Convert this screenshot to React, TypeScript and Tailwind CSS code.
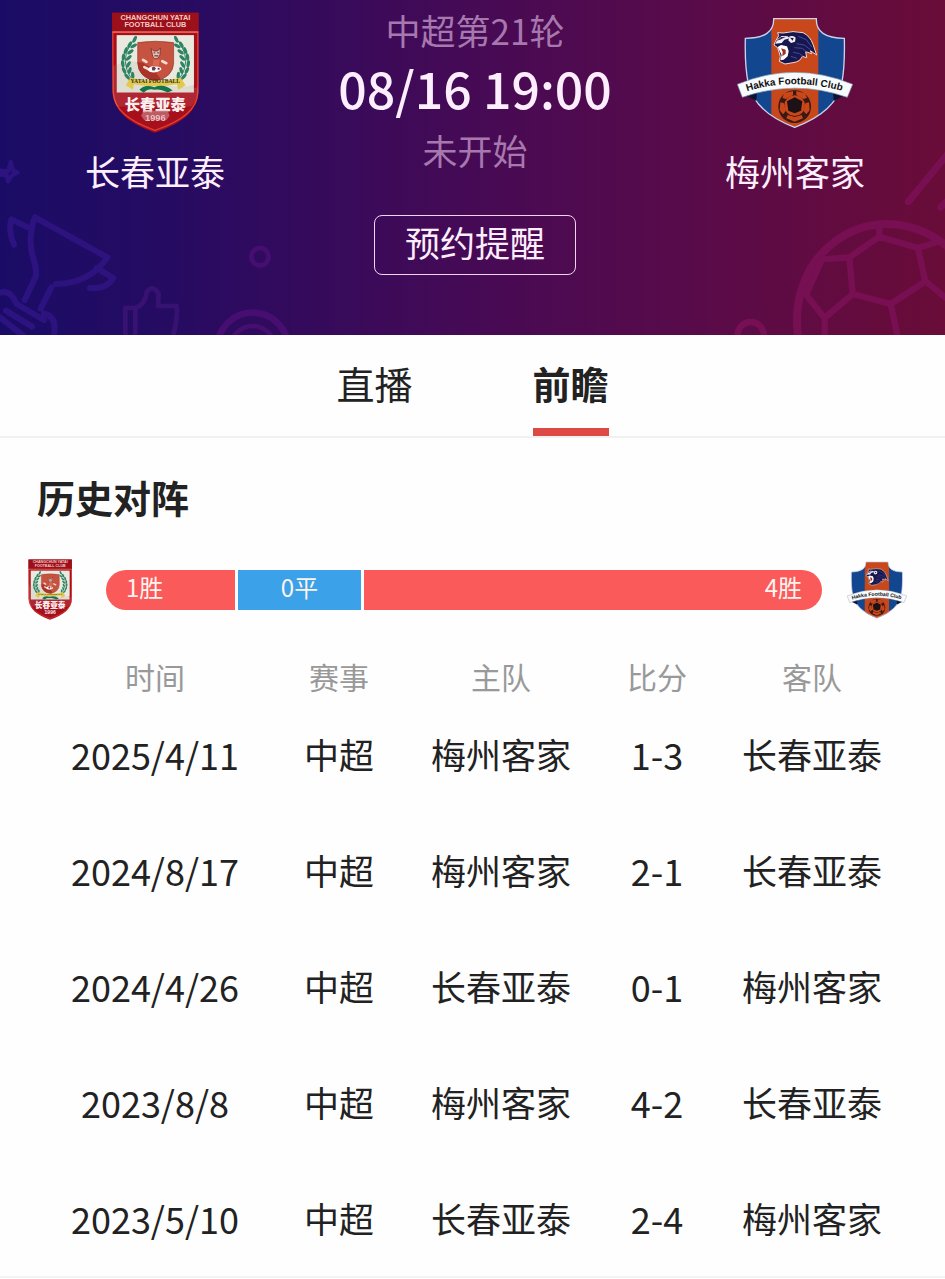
import React from 'react';

interface CrestProps {
  className?: string;
  smudged?: boolean;
}

interface Match {
  date: string;
  league: string;
  home: string;
  score: string;
  away: string;
}

const matches: Match[] = [
  { date: '2025/4/11', league: '中超', home: '梅州客家', score: '1-3', away: '长春亚泰' },
  { date: '2024/8/17', league: '中超', home: '梅州客家', score: '2-1', away: '长春亚泰' },
  { date: '2024/4/26', league: '中超', home: '长春亚泰', score: '0-1', away: '梅州客家' },
  { date: '2023/8/8', league: '中超', home: '梅州客家', score: '4-2', away: '长春亚泰' },
  { date: '2023/5/10', league: '中超', home: '长春亚泰', score: '2-4', away: '梅州客家' }
];

// Leaves of the left half of the wreath, mirrored for the right half
const leaves = [
  [131, 118, 25], [116, 134, 30], [128, 138, 60], [104, 152, 20], [118, 156, 55],
  [97, 172, 5], [113, 174, 45], [95, 192, -10], [112, 194, 30], [99, 212, -25],
  [116, 212, 15], [108, 230, -40], [125, 227, -5], [122, 244, -55]
];

const Wreath: React.FC = () => (
  <g fill="#2c8463">
    <path d="M136 110 Q90 160 107 208 Q116 238 142 252" fill="none" stroke="#2c8463" strokeWidth="3" />
    {leaves.map(([x, y, r]) => (
      <ellipse key={`${x}-${y}`} cx={x} cy={y} rx="5" ry="11" transform={`rotate(${r} ${x} ${y})`} />
    ))}
  </g>
);

const YataiCrest: React.FC<CrestProps> = ({ className, smudged }) => (
  <svg viewBox="60 36 264 364" className={className} role="img" aria-label="长春亚泰">
    <path d="M63 38 H323 V275 C322 335 270 372 192 399 C116 372 66 335 64 275 Z" fill="#a80f1c" />
    <path d="M63 38 H323 V95 H63 Z" fill="#9c101c" />
    <path d="M65 97 H321 V275 C320 332 268 366 192 392 C118 366 68 332 66 275 Z" fill="none" stroke="#e2412f" strokeWidth="4" />
    <path d="M64 96 H322" stroke="#f0a49a" strokeWidth="2" />
    <g fill="#f5c9c4" fontFamily="Liberation Sans, sans-serif" fontWeight="700" textAnchor="middle">
      <text x="193" y="61" fontSize="22">CHANGCHUN YATAI</text>
      <text x="193" y="82" fontSize="22">FOOTBALL CLUB</text>
    </g>
    <path d="M77 106 H309 V278 H77 Z" fill="#dcdacd" />
    <path d="M77 106 H309 V255 Q240 275 200 235 Q140 160 77 195 Z" fill="#f0efe8" opacity=".7" />
    <path d="M65 200 Q120 165 180 215 Q240 285 321 262 V275 C318 300 310 310 300 320 L77 320 Q66 300 65 275 Z" fill="#fff" opacity=".1" />
    <Wreath />
    <g transform="translate(387 0) scale(-1 1)">
      <Wreath />
    </g>
    <path d="M140 128 Q193 120 248 128 V190 Q246 232 193 244 Q142 232 140 190 Z" fill="#c65340" stroke="#9a3527" strokeWidth="2" />
    <path d="M140 186 Q176 190 208 236 Q200 243 193 244 Q142 232 140 190 Z" fill="#a93427" />
    {/* mascot */}
    <path d="M180 146 L188 153 L200 153 L208 144 L207 165 Q203 177 195 177 Q186 177 184 164 Z" fill="#f0bcae" stroke="#7c3a33" strokeWidth="3" />
    <path d="M188 159 H193 M199 159 H204 M190 168 H202" stroke="#432023" strokeWidth="3" />
    <path d="M187 179 H207 L203 198 H185 Z" fill="#dc6750" />
    <path d="M156 180 L166 186 M214 184 L226 190 M160 202 L176 210" stroke="#f6dcd0" strokeWidth="8" strokeLinecap="round" />
    <path d="M170 210 Q176 196 192 200 Q212 198 211 210 Q196 222 176 216 Z" fill="#fff" />
    <path d="M182 203 L189 200 L195 205 L191 212 H184 Z M200 204 H206 V210 H200 Z" fill="#6b3a4a" />
    <path d="M104 256 L118 234 Q193 252 269 234 L284 256 L262 270 L258 253 Q193 266 128 253 L126 270 Z" fill="#e3c84e" />
    <path d="M145 270 Q160 252 190 262 Q220 250 245 272 L230 278 Q206 266 190 270 Q172 265 158 279 Z" fill="#15744a" />
    <text x="193" y="249" fontSize="17" fontFamily="Liberation Serif, serif" fontWeight="700" textAnchor="middle" fill="#2d3320">YATAI FOOTBALL</text>
    <text x="193" y="330" fontSize="46" fontFamily="Noto Sans CJK SC, sans-serif" fontWeight="900" textAnchor="middle" fill="#fbeeee">长春亚泰</text>
    {smudged ? (
      <g className="blur-[1px]">
        <path d="M158 332 H230 L236 348 L226 362 H160 L150 348 Z" fill="#cf8d93" opacity=".6" />
        <text x="193" y="363" fontSize="28" fontFamily="Liberation Sans, sans-serif" fontWeight="700" textAnchor="middle" fill="#e6bfc2">1996</text>
      </g>
    ) : (
      <text x="193" y="363" fontSize="30" fontFamily="Liberation Sans, sans-serif" fontWeight="700" textAnchor="middle" fill="#fbeeee">1996</text>
    )}
  </svg>
);

const HakkaCrest: React.FC<CrestProps> = ({ className }) => (
  <svg viewBox="38 50 348 336" className={className} role="img" aria-label="梅州客家">
    <defs>
      <clipPath id="hakka-shield">
        <path d="M148 55 H276 Q274 114 360 114 Q362 200 352 250 Q335 335 211 381 Q90 335 72 250 Q61 200 63 114 Q150 114 148 55 Z" />
      </clipPath>
      <path id="hakka-ribbon" d="M68 273 Q212 228 370 277" />
    </defs>
    <g clipPath="url(#hakka-shield)">
      <path d="M60 50 H365 V385 H60 Z" fill="#12468f" />
      <path d="M141 50 H282 V385 H141 Z" fill="#c8481c" />
    </g>
    <path d="M148 55 H276 Q274 114 360 114 Q362 200 352 250 Q335 335 211 381 Q90 335 72 250 Q61 200 63 114 Q150 114 148 55 Z" fill="none" stroke="#c9d4ee" strokeWidth="4" />
    {/* lion head */}
    <path d="M149 134 L153 124 L163 106 L160 97 L176 98 Q206 90 236 97 Q258 108 266 132 L277 164 L258 151 L262 160 L244 154 L247 172 L234 168 Q228 184 206 187 L182 191 L165 183 L168 168 L160 142 Z" fill="#17174e" stroke="#f6d9d0" strokeWidth="3" strokeLinejoin="round" />
    <path d="M153 130 L160 116 L172 107 L190 108 L196 114 L180 118 L172 128 Z" fill="#f4eef2" />
    <path d="M156 122 L170 110 L184 110 L170 117 Z" fill="#312a6d" />
    <path d="M196 108 Q208 104 214 112 L212 124 L200 128 L192 120 Z" fill="#f3eef2" />
    <path d="M197 112 L208 113 L205 121 Z" fill="#17174e" />
    <path d="M160 140 L170 134 L188 138 L193 152 L190 168 L178 178 L168 180 L172 164 Z" fill="#fff" />
    <path d="M170 144 L184 148 L184 160 L174 168 L175 155 Z" fill="#a72b22" />
    <path d="M216 130 L240 134 L258 148 M210 142 L234 144 L246 154 M206 156 L226 160 L236 168 M222 108 L246 118 L262 140 M200 168 L218 174" fill="none" stroke="#4048a0" strokeWidth="3" />
    {/* football */}
    <circle cx="211" cy="319" r="49" fill="#3a1813" />
    <g fill="#c8481c">
      <path d="M180 279 L206 272 L206 284 L184 296 L174 292 Z M216 272 L242 279 L248 292 L238 296 L216 284 Z" />
      <path d="M168 306 L179 309 L184 333 L176 342 L166 330 Z M254 306 L243 309 L238 333 L246 342 L256 330 Z" />
      <path d="M190 344 L211 350 L232 344 L236 354 L211 364 L186 354 Z" />
      <circle cx="211" cy="316" r="31" />
    </g>
    <path d="M211 291 L234 303 L230 331 L211 339 L192 331 L188 303 Z" fill="#1d1115" />
    {/* ribbon */}
    <path d="M62 284 L98 275 L96 302 Z M362 284 L326 275 L328 302 Z" fill="#0b1533" />
    <path d="M39 252 Q212 180 385 252 L369 291 Q212 236 54 291 Z" fill="#f8fbfd" stroke="#7e94a8" strokeWidth="2" />
    <text fontSize="30" fontFamily="Liberation Sans, sans-serif" fontWeight="700" fill="#111">
      <textPath href="#hakka-ribbon">Hakka Football Club</textPath>
    </text>
  </svg>
);

// Faint trophy, thumb and rings in the left corner of the header
const LeftArt: React.FC = () => (
  <svg viewBox="0 0 930 585" className="absolute bottom-0 left-0 h-[195px] w-[310px]" fill="none" strokeLinecap="round" strokeLinejoin="round" aria-hidden="true">
    <g stroke="#34168a" strokeWidth="18" opacity=".7">
      <path d="M0 92 L24 94 L32 66 L38 90 L52 98 L36 106 L24 124 L20 106 L0 104" strokeWidth="13" />
      <path d="M105 232 L322 352 Q270 430 168 432 M105 232 Q82 290 98 350 Q110 380 108 408 L74 480" />
      <path d="M84 262 L34 238 Q24 270 42 314 M290 384 L340 414 Q320 448 270 444" />
      <path d="M154 442 L122 506 M0 458 Q30 446 50 492 L132 540 M18 512 L96 560 M0 532 L68 585 M132 520 Q172 530 162 585" />
    </g>
    <g stroke="#3f1578" strokeWidth="14" opacity=".75">
      <path d="M376 585 V504 H406 V585 M406 504 Q436 494 440 456 Q460 432 476 462 L474 498 H530 Q534 530 520 585" />
    </g>
    <g stroke="#4f1078" opacity=".75">
      <circle cx="780" cy="350" r="26" strokeWidth="14" />
      <circle cx="758" cy="624" r="106" strokeWidth="20" />
      <circle cx="758" cy="624" r="66" strokeWidth="14" />
    </g>
  </svg>
);

// Faint football in the right corner of the header
const RightArt: React.FC = () => (
  <svg viewBox="0 0 735 585" className="absolute right-0 bottom-0 h-[195px] w-[245px]" fill="none" stroke="#7d1058" strokeLinecap="round" strokeLinejoin="round" aria-hidden="true">
    <g opacity=".8">
      <path d="M294 585 C280 480 318 390 366 340 C420 282 480 254 556 252 C630 252 690 276 745 322" strokeWidth="24" />
      <path d="M538 258 V290 L448 352 L458 462 L572 492 L676 424 L654 324 L538 290 M448 352 L366 358 L318 464 L374 534 V585 M654 324 L712 306 M458 462 L374 534 M572 492 L592 585 M676 424 L745 480" strokeWidth="19" />
      <path d="M625 185 L745 40 M722 202 L745 180" strokeWidth="21" />
      <circle cx="152" cy="586" r="40" strokeWidth="19" />
    </g>
  </svg>
);

const Header: React.FC = () => (
  <header className="relative h-[335px] overflow-hidden bg-[linear-gradient(to_right,#1a0c66,#260b62_18%,#460a55_50%,#5c0b47_78%,#690c38)] text-[#fdeefd]">
    <LeftArt />
    <RightArt />
    <div className="relative flex justify-between pt-3 pr-20 pl-[85px]">
      <div className="flex w-[140px] flex-col items-center">
        <YataiCrest className="h-[121px] w-[88px]" smudged />
        <h2 className="mt-4 text-[35px] leading-[44px] whitespace-nowrap">长春亚泰</h2>
      </div>
      <div className="-mt-0.5 flex flex-col items-center">
        <p className="text-[35px] leading-10 text-[#a778ae]">中超第21轮</p>
        <p className="mt-1.5 text-[50px] leading-[62px] font-medium whitespace-nowrap">08/16 19:00</p>
        <p className="mt-3 text-[35px] leading-10 text-[#a778ae]">未开始</p>
        <button type="button" className="mt-[45px] flex h-[60px] w-[202px] justify-center rounded-lg border border-[#f0d5ef] text-[35px] leading-[52px]">
          预约提醒
        </button>
      </div>
      <div className="flex w-[140px] flex-col items-center">
        <div className="flex h-[121px] items-center">
          <HakkaCrest className="h-[112px] w-[116px]" />
        </div>
        <h2 className="mt-4 text-[35px] leading-[44px] whitespace-nowrap">梅州客家</h2>
      </div>
    </div>
  </header>
);

const Tabs: React.FC = () => (
  <nav className="flex h-[103px] justify-center gap-[120px] border-b-2 border-[#f1f1f1] text-[38px] leading-[44px]">
    <button type="button" className="flex flex-col justify-between pt-[26px]">
      直播
    </button>
    <button type="button" className="flex flex-col justify-between pt-[26px] font-bold" aria-current="page">
      前瞻
      <span className="block h-2 w-full bg-[#dd4a45]" />
    </button>
  </nav>
);

const WinBar: React.FC = () => (
  <div className="mt-9 flex items-center pr-[38px] pl-7">
    <YataiCrest className="h-[61px] w-11" />
    <div className="mr-[25px] ml-[34px] grid h-10 flex-1 grid-cols-[129fr_123fr_458fr] gap-[3px] overflow-hidden rounded-full text-2xl leading-[34px] text-[#fff3f0]">
      <div className="bg-[#fa5a5a] pl-5">1胜</div>
      <div className="bg-[#3ba1e8] text-center">0平</div>
      <div className="bg-[#fa5a5a] pr-5 text-right">4胜</div>
    </div>
    <HakkaCrest className="h-[58px] w-[60px]" />
  </div>
);

const HistoryTable: React.FC = () => (
  <div className="border-b-2 border-[#f3f3f3] pt-9 pr-[60px] pl-[59px]">
    <table className="w-full table-fixed text-center whitespace-nowrap">
      <thead className="text-3xl leading-10 text-[#999999]">
        <tr>
          <th className="w-[192px] p-0 font-normal">时间</th>
          <th className="w-[176px] p-0 font-normal">赛事</th>
          <th className="w-[148px] p-0 font-normal">主队</th>
          <th className="w-[164px] p-0 font-normal">比分</th>
          <th className="w-[146px] p-0 font-normal">客队</th>
        </tr>
      </thead>
      <tbody className="text-[35px] leading-[44px]">
        {matches.map((match) => (
          <tr key={match.date} className="h-[116px]">
            <td className="p-0 text-4xl leading-[44px]">{match.date}</td>
            <td className="p-0">{match.league}</td>
            <td className="p-0">{match.home}</td>
            <td className="p-0 text-4xl leading-[44px]">{match.score}</td>
            <td className="p-0">{match.away}</td>
          </tr>
        ))}
      </tbody>
    </table>
  </div>
);

const App: React.FC = () => {
  return (
    <main className="min-h-screen bg-[#fefefe] font-['Noto_Sans_CJK_SC',sans-serif] text-[#222222]">
      <Header />
      <Tabs />
      <section>
        <h1 className="pt-[33px] pl-[37px] text-[38px] leading-[52px] font-bold">历史对阵</h1>
        <WinBar />
        <HistoryTable />
      </section>
    </main>
  );
};

export default App;
